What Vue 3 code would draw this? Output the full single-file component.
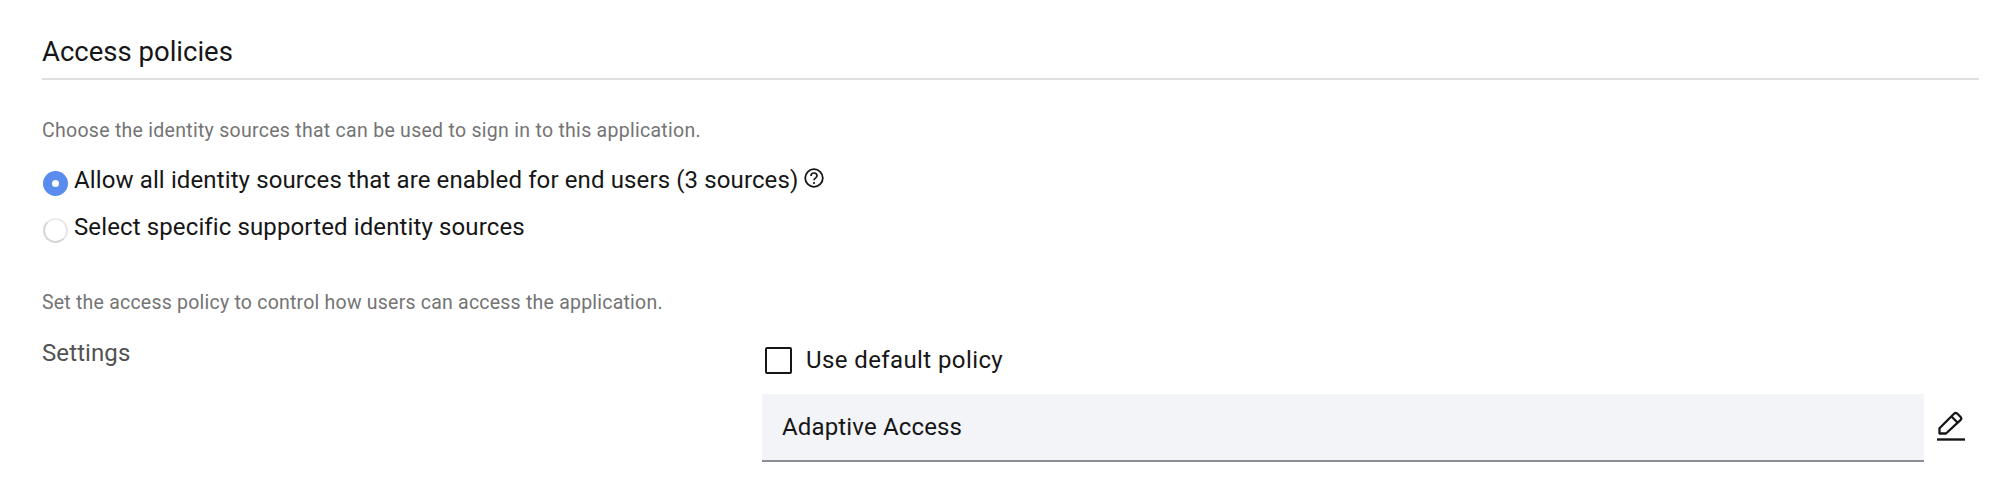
<template>
  <main class="page">
    <h2 class="title">Access policies</h2>
    <p class="help first">Choose the identity sources that can be used to sign in to this application.</p>
    <div class="radios">
      <label class="radio">
        <span class="dot on"><i></i></span>
        <span>Allow all identity sources that are enabled for end users (3 sources)</span>
        <svg class="q" viewBox="0 0 20 20" width="20" height="20" fill="none" stroke="#161616">
          <circle cx="10" cy="10" r="8.800" stroke-width="1.800"/>
          <path d="M7 8c0-1.900 1.300-3 3-3s3 1.100 3 2.800c0 2.400-3 2.300-3 4.400" stroke-width="1.700"/>
          <circle cx="10" cy="15" r="1.100" fill="#161616" stroke="none"/>
        </svg>
      </label>
      <label class="radio">
        <span class="dot"></span>
        <span>Select specific supported identity sources</span>
      </label>
    </div>
    <p class="help second">Set the access policy to control how users can access the application.</p>
    <div class="settings">
      <div class="label">Settings</div>
      <div class="control">
        <label class="check"><span class="box"></span><span>Use default policy</span></label>
        <div class="row">
          <div class="field">Adaptive Access</div>
          <svg class="pen" viewBox="0 0 30 30" width="30" height="30" fill="none" stroke="#161616">
            <path d="M1 28.500h28" stroke-width="2.400"/>
            <path d="M3.500 22.500v-5.200L18 2.800c1-1 2.400-1 3.400 0l3 3c1 1 1 2.400 0 3.400L10 22.500Z" stroke-width="2.300" stroke-linejoin="round"/>
            <path d="M15.500 5.500l6.500 6.500" stroke-width="2.300"/>
          </svg>
        </div>
      </div>
    </div>
  </main>
</template>

<script setup>
</script>

<style>
html, body { margin: 0; background: #fff; }
</style>

<style scoped>
.page {
  box-sizing: border-box;
  width: 2004px;
  height: 492px;
  overflow: hidden;
  padding: 33px 25px 0 42px;
  font-family: Roboto, "Noto Sans", sans-serif;
  color: #161616;
}
.title {
  margin: 0;
  font-size: 27.500px;
  font-weight: 400;
  line-height: 38px;
  padding-bottom: 7px;
  border-bottom: 2px solid #e0e0e0;
}
.help {
  margin: 0;
  font-size: 19.500px;
  letter-spacing: 0.28px;
  line-height: 26px;
  color: #747474;
}
.first { margin-top: 38px; }
.radios { margin-top: 20px; display: flex; flex-direction: column; gap: 15px; }
.radio { display: flex; align-items: center; gap: 6px; font-size: 24px; letter-spacing: 0.12px; line-height: 32px; }
.dot {
  box-sizing: border-box;
  width: 25px; height: 25px; margin-top: 6px; margin-left: 1px;
  border-radius: 50%;
  border: 2px solid #d6d6d6;
  border-top-color: #ececec;
  border-right-color: #e6e6e6;
  display: flex; align-items: center; justify-content: center;
  flex: none;
}
.dot.on { background: #5a8cee; border-color: #5a8cee; }
.dot i { width: 7px; height: 7px; border-radius: 50%; background: #fff; }
.q { margin-left: 0; margin-top: -4px; }
.second { margin-top: 47px; letter-spacing: 0.22px; }
.settings { display: flex; margin-top: 21px; }
.label { width: 720px; flex: none; font-size: 24px; letter-spacing: 0.1px; line-height: 32px; color: #525252; }
.control { flex: 1; }
.check { display: flex; align-items: center; gap: 14px; margin-left: 3px; margin-top: 7px; font-size: 24px; letter-spacing: 0.4px; line-height: 32px; }
.box { box-sizing: border-box; width: 27px; height: 27px; border: 2px solid #161616; border-radius: 2px; }
.row { display: flex; align-items: center; gap: 12px; margin-top: 18px; }
.field {
  box-sizing: border-box;
  width: 1162px; height: 68px;
  background: #f2f4f8;
  border-bottom: 2px solid #8d8d96;
  padding: 0 20px;
  display: flex; align-items: center;
  font-size: 24px;
  letter-spacing: 0.15px;
}
.pen { flex: none; margin-top: -4px; }
</style>
